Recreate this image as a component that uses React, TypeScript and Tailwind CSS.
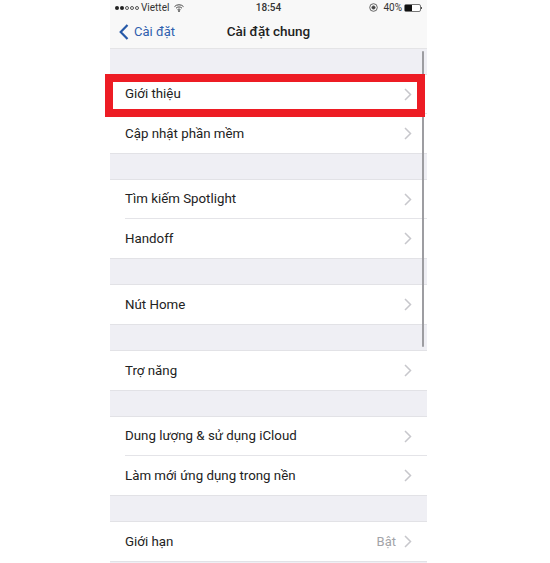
const groups = [
  ["Giới thiệu", "Cập nhật phần mềm"],
  ["Tìm kiếm Spotlight", "Handoff"],
  ["Nút Home"],
  ["Trợ năng"],
  ["Dung lượng & sử dụng iCloud", "Làm mới ứng dụng trong nền"],
];

const Chevron = () => (
  <svg width="8" height="13" viewBox="0 0 8 13" fill="none" stroke="#c7c7cc" strokeWidth="1.5" className="shrink-0">
    <path d="M1 1l5.5 5.5L1 12" />
  </svg>
);

const Row = ({ label, value, last }: { label: string; value?: string; last: boolean }) => (
  <div className="h-[39px] pl-[15px] bg-white">
    <div className={`h-full flex items-center justify-between pr-[15px] ${last ? "" : "border-b border-[#e4e4e8]"}`}>
      <span className="text-[13.3px] text-[#222222]">{label}</span>
      <div className="flex items-center gap-[8px]">
        {value && <span className="text-[13px] text-[#a3a3a8]">{value}</span>}
        <Chevron />
      </div>
    </div>
  </div>
);

const Group = ({ items, value }: { items: string[]; value?: string }) => (
  <div className="mt-[25px] border-y border-[#e2e2e6] bg-white">
    {items.map((item, i) => (
      <Row key={item} label={item} value={value} last={i === items.length - 1} />
    ))}
  </div>
);

export default function App() {
  return (
    <div className="w-[550px] h-[563px] bg-white overflow-hidden font-['Roboto','Liberation_Sans',sans-serif]">
      <div className="relative ml-[110px] w-[317px] h-[563px] bg-[#efeff4] overflow-hidden">
        {/* Nav bar */}
        <div className="h-[49px] bg-[#f8f8f8] border-b border-[#e4e4e6]">
          <div className="h-[15px] grid grid-cols-3 items-center pl-[5px] pr-[5px] text-[10px] text-[#333333]">
            <div className="flex items-center gap-[2px]">
              <div className="flex items-center gap-[1px]">
                <span className="w-[4px] h-[4px] rounded-full bg-[#222222]" />
                <span className="w-[4px] h-[4px] rounded-full bg-[#222222]" />
                <span className="w-[4px] h-[4px] rounded-full border-[0.5px] border-[#555555]" />
                <span className="w-[4px] h-[4px] rounded-full border-[0.5px] border-[#555555]" />
                <span className="w-[4px] h-[4px] rounded-full border-[0.5px] border-[#555555]" />
              </div>
              <span>Viettel</span>
              <svg width="10" height="8" viewBox="0 0 10 8" fill="none" stroke="#333333" strokeWidth="0.9" className="ml-[3px]">
                <path d="M0.5 2.6a6.4 6.4 0 0 1 9 0" />
                <path d="M2 4.2a4.2 4.2 0 0 1 6 0" />
                <path d="M3.5 5.7a2.1 2.1 0 0 1 3 0" />
                <circle cx="5" cy="7" r="0.5" fill="#333333" />
              </svg>
            </div>
            <span className="text-center font-medium">18:54</span>
            <div className="flex items-center justify-end gap-[2px]">
              <svg width="9" height="9" viewBox="0 0 9 9" fill="none" stroke="#444444" strokeWidth="0.8" className="mr-[3px]">
                <circle cx="4.5" cy="4.5" r="3.8" />
                <circle cx="4.5" cy="4.5" r="1.6" fill="#444444" />
              </svg>
              <span>40%</span>
              <div className="flex items-center">
                <div className="w-[17px] h-[8px] border border-[#777777] rounded-[2px] bg-white shrink-0">
                  <div className="w-[7px] h-full bg-[#111111]" />
                </div>
                <span className="w-[1px] h-[2px] bg-[#555555] shrink-0" />
              </div>
            </div>
          </div>
          <div className="h-[33px] grid grid-cols-3 items-center">
            <div className="flex items-center gap-[5px] pl-[9px] text-[#2f5fae] text-[13px]">
              <svg width="10" height="16" viewBox="0 0 10 16" fill="none" stroke="#2659a8" strokeWidth="2.2" className="shrink-0">
                <path d="M8.5 1L1.7 8l6.8 7" />
              </svg>
              <span>Cài đặt</span>
            </div>
            <span className="text-center whitespace-nowrap text-[13.5px] font-medium text-[#222222]">Cài đặt chung</span>
          </div>
        </div>

        {groups.map((items) => (
          <Group key={items[0]} items={items} />
        ))}
        <Group items={["Giới hạn"]} value="Bật" />

        {/* Scroll indicator */}
        <div className="absolute left-[312px] top-[51px] w-[2px] h-[296px] rounded-full bg-[#9d9da1]" />
      </div>
      {/* Red highlight */}
      <div className="absolute left-[105px] top-[74px] w-[320px] h-[43px] border-[8px] border-[#ed1c24]" />
    </div>
  );
}
